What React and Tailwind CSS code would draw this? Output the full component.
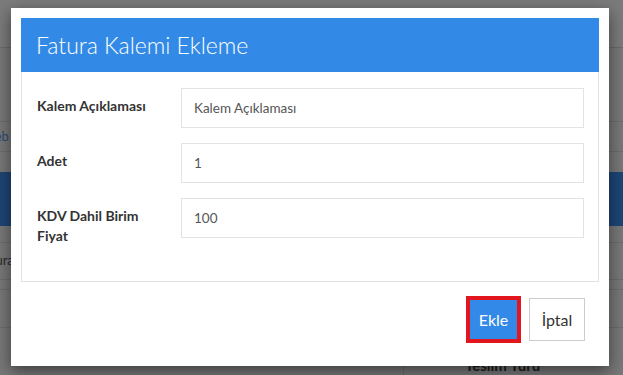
const fields = [
  { label: 'Kalem Açıklaması', value: 'Kalem Açıklaması' },
  { label: 'Adet', value: '1' },
  { label: 'KDV Dahil Birim Fiyat', value: '100' },
];

const Backdrop = () => (
  <div className="h-[375px] w-full overflow-hidden bg-[#787878] font-['Lato',sans-serif]">
    <div className="h-[48px] border-b border-[#6a6a6a] bg-[#7b7b7b]" />
    <div className="h-[74px] border-b border-[#6c6c6c]" />
    <div className="flex h-[30px] items-center border-b border-[#6c6c6c] text-[13px] text-[#2c4a72]">
      <span className="-ml-[18px]">Web</span>
    </div>
    <div className="h-[20px]" />
    <div className="h-[54px] bg-[#1d4575]" />
    <div className="h-[17px] border-b border-[#6c6c6c]" />
    <div className="flex h-[37px] items-center border-b border-[#6c6c6c] text-[13px] text-[#2a2a2a]">
      <span className="-ml-[22px]">Fatura</span>
    </div>
    <div className="h-[10px] border-b border-[#6c6c6c]" />
    <div className="h-[38px] border-b border-[#6c6c6c]" />
    <div className="flex h-[50px]">
      <div className="w-[403px]" />
      <div className="flex-1 border-l border-[#6a6a6a] pl-[61px] pt-[30px] text-[15px] font-bold leading-none text-[#1f1f1f]">
        Teslim Türü
      </div>
    </div>
  </div>
);

export default function App() {
  return (
    <div className="relative h-[375px] w-[623px] overflow-hidden">
      <Backdrop />
      <div className="absolute left-[11px] top-[8px] w-[598px] bg-white p-[10px] font-['Lato',sans-serif] shadow-[0_5px_15px_rgba(0,0,0,0.5)]">
        <div className="flex h-[54px] items-center bg-[#338ae6] pl-[15px]">
          <h2 className="text-[23px] font-light text-white">Fatura Kalemi Ekleme</h2>
        </div>
        <div className="flex flex-col gap-[15px] border-x border-b border-[#e3e3e3] pb-[43px] pl-[15px] pr-[14px] pt-[16px]">
          {fields.map((f) => (
            <div key={f.label} className="flex h-[40px] items-start">
              <label className="w-[144px] pr-[18px] pt-[8px] text-[14px] font-bold leading-[20px] text-[#333]">
                {f.label}
              </label>
              <div className="flex h-[40px] flex-1 items-center border border-[#e3e3e3] px-[12px] text-[13.5px] text-[#555]">
                {f.value}
              </div>
            </div>
          ))}
        </div>
        <div className="flex items-center justify-end gap-[8px] pr-[14px] pt-[14px] pb-[13px]">
          <button
            type="button"
            className="h-[47px] w-[55px] border-[4px] border-[#e3151f] bg-[#3389e8] text-[16px] text-white"
          >
            Ekle
          </button>
          <button
            type="button"
            className="h-[43px] w-[56px] border border-[#cccccc] bg-white text-[16px] text-[#333]"
          >
            İptal
          </button>
        </div>
      </div>
    </div>
  );
}
